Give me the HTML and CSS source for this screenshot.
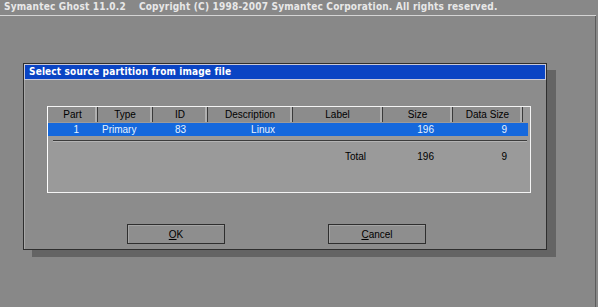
FILE: index.html
```html
<!DOCTYPE html>
<html lang="en">
<head>
  <meta charset="UTF-8">
  <title>Symantec Ghost</title>
  <link rel="stylesheet" href="styles.css">
</head>
<body>
  <div class="screen">
    <header class="topbar">
      <span>Symantec Ghost 11.0.2</span>
      <span>Copyright (C) 1998-2007 Symantec Corporation. All rights reserved.</span>
    </header>
    <main class="desk">
      <div class="dialog">
        <div class="title">Select source partition from image file</div>
        <div class="table">
          <div class="row head">
            <span>Part</span>
            <span>Type</span>
            <span>ID</span>
            <span>Description</span>
            <span>Label</span>
            <span>Size</span>
            <span>Data Size</span>
          </div>
          <div class="row sel">
            <span class="c-part">1</span>
            <span class="c-type">Primary</span>
            <span class="c-id">83</span>
            <span class="c-desc">Linux</span>
            <span class="c-label"></span>
            <span class="c-size">196</span>
            <span class="c-data">9</span>
          </div>
          <div class="rule"></div>
          <div class="row total">
            <span></span>
            <span></span>
            <span></span>
            <span></span>
            <span class="c-label">Total</span>
            <span class="c-size">196</span>
            <span class="c-data">9</span>
          </div>
        </div>
        <div class="buttons">
          <button><u>O</u>K</button>
          <button><u>C</u>ancel</button>
        </div>
      </div>
    </main>
  </div>
</body>
</html>
```

FILE: styles.css
```css
* {
  margin: 0;
  padding: 0;
  box-sizing: border-box;
}

html, body {
  width: 100%;
  height: 100%;
  background-color: #888;
}

body {
  font-family: "Liberation Sans", Arial, sans-serif;
  font-size: 10px;
  color: #000;
}

.screen {
  width: 596px;
  height: 307px;
  display: flex;
  flex-direction: column;
}

.topbar {
  display: flex;
  gap: 13px;
  height: 16px;
  padding: 1px 0 0 4px;
  border-bottom: 1px solid #d4d4d4;
  font-family: "DejaVu Sans", sans-serif;
  font-stretch: condensed;
  font-weight: bold;
  font-size: 10px;
  letter-spacing: 0.2px;
  color: #e8e8e8;
  white-space: nowrap;
}

.desk {
  flex: 1;
  border-right: 1px solid #5c5c5c;
  padding: 47px 0 0 23px;
}

.dialog {
  width: 524px;
  height: 187px;
  background-color: #8c8c8c;
  border: 1px solid #2e2e2e;
  box-shadow: inset 1px 1px 0 #a8a8a8, 9px 7px 0 #646464;
  display: flex;
  flex-direction: column;
}

.title {
  height: 16px;
  background-color: #0a44c4;
  border: 1px solid #c8c8d8;
  color: #fff;
  font-family: "DejaVu Sans", sans-serif;
  font-stretch: condensed;
  font-weight: bold;
  font-size: 10px;
  letter-spacing: 0.15px;
  padding: 1px 0 0 4px;
  white-space: nowrap;
}

.table {
  margin: 26px 0 0 23px;
  width: 484px;
  height: 87px;
  background-color: #9a9a9a;
  border: 1px solid #f4f4f4;
  border-left-color: #fff;
  padding-right: 6px;
}

.row {
  display: grid;
  grid-template-columns: 50px 55px 55px 85px 90px 70px 70px;
  height: 13px;
  line-height: 13px;
}

.row span {
  padding: 0 4px;
  white-space: nowrap;
}

.head {
  height: 15px;
  line-height: 15px;
}

.head span {
  text-align: center;
  background-color: #8c8c8c;
  border-right: 1px solid #3a3a3a;
  box-shadow: inset -2px 0 0 #b0b0b0;
}

.sel {
  margin-top: 1px;
  background-color: #1568dc;
  color: #e6f2ff;
  width: 480px;
}

.c-part { text-align: right; padding-right: 19px !important; }
.c-type { text-align: left; }
.c-id { text-align: center; }
.c-desc { text-align: right; padding-right: 18px !important; }
.c-label { text-align: right; padding-right: 17px !important; }
.c-size { text-align: right; padding-right: 19px !important; }
.c-data { text-align: right; padding-right: 16px !important; }

.rule {
  margin: 4px 0 0 5px;
  width: 474px;
  height: 2px;
  border-top: 1px solid #3c3c3c;
  border-bottom: 1px solid #b4b4b4;
}

.total {
  margin-top: 8px;
}

.buttons {
  display: flex;
  gap: 103px;
  margin: 31px 0 0 103px;
}

.buttons button {
  width: 98px;
  height: 20px;
  background-color: #8e8e8e;
  border: 1px solid #2e2e2e;
  box-shadow: inset 1px 1px 0 #a4a4a4;
  font-family: "Liberation Sans", Arial, sans-serif;
  font-size: 10px;
  color: #000;
}
```
